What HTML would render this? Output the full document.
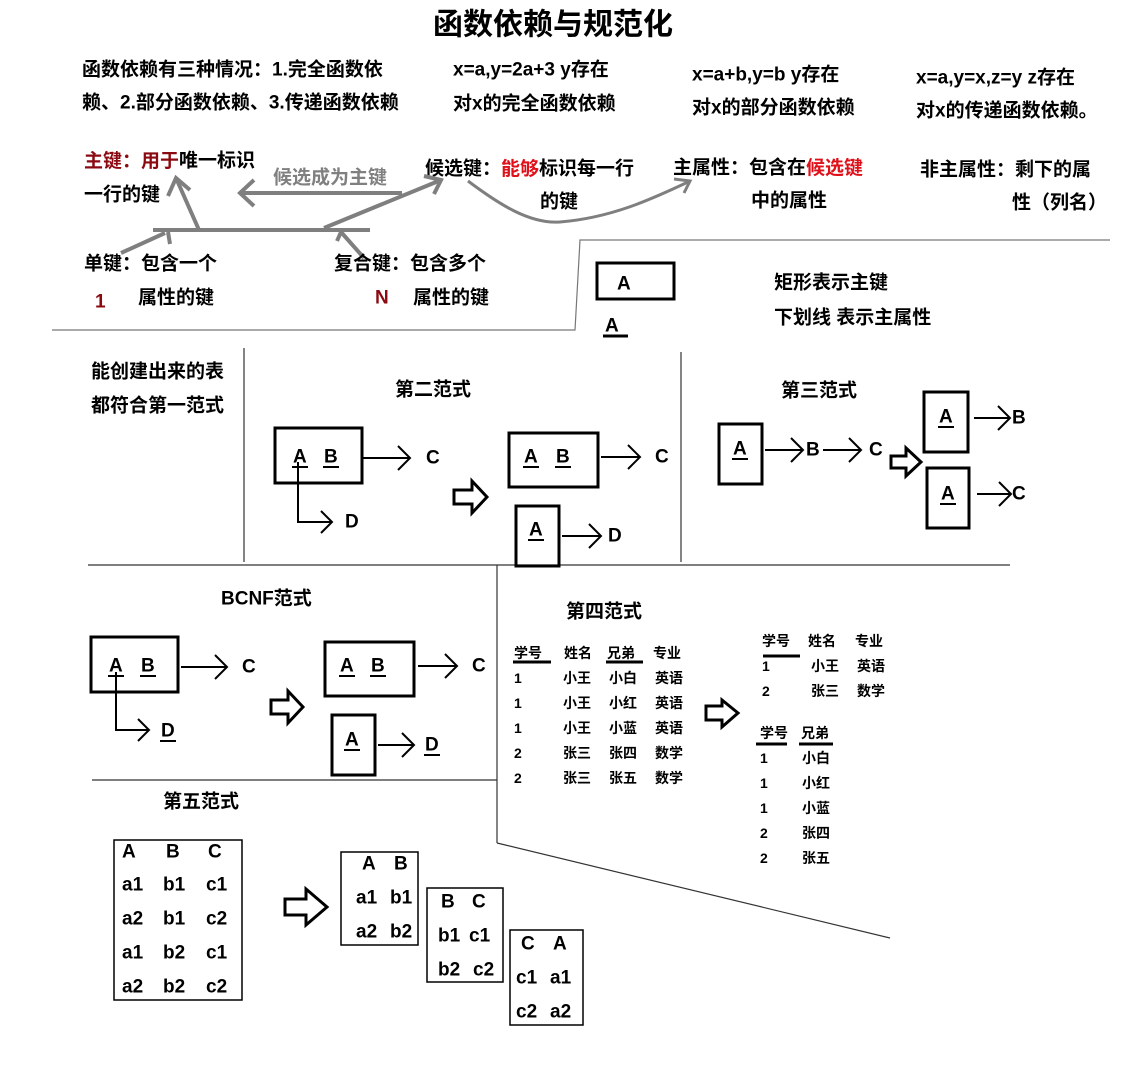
<!DOCTYPE html>
<html><head><meta charset="utf-8"><style>
html,body{margin:0;padding:0;background:#fff;}
svg{display:block;}
text{font-family:"Liberation Sans","Noto Sans CJK SC",sans-serif;font-weight:bold;dominant-baseline:central;}
.t{font-size:19px;fill:#000;}
.s{font-size:14px;fill:#000;}
.r{fill:#e0101a;}
.dr{fill:#8b0a12;}
.g{fill:#808080;}
.bx{fill:none;stroke:#000;stroke-width:3;}
.ln{fill:none;stroke:#000;stroke-width:2;}
.gl{fill:none;stroke:#7f7f7f;stroke-width:4;}
.th{fill:none;stroke:#777;stroke-width:1.2;}
.ha{fill:#fff;stroke:#000;stroke-width:3;}
</style></head><body>
<svg width="1137" height="1072" viewBox="0 0 1137 1072" xmlns="http://www.w3.org/2000/svg">
<text x="553" y="25" text-anchor="middle" style="font-size:30px">函数依赖与规范化</text>

<text class="t" x="82" y="70">函数依赖有三种情况：1.完全函数依</text>
<text class="t" x="82" y="103">赖、2.部分函数依赖、3.传递函数依赖</text>
<text class="t" x="453" y="70">x=a,y=2a+3  y存在</text>
<text class="t" x="453" y="104">对x的完全函数依赖</text>
<text class="t" x="692" y="75">x=a+b,y=b  y存在</text>
<text class="t" x="692" y="108">对x的部分函数依赖</text>
<text class="t" x="916" y="78">x=a,y=x,z=y z存在</text>
<text class="t" x="916" y="111">对x的传递函数依赖。</text>

<text class="t" x="84" y="161"><tspan class="dr">主键：用于</tspan>唯一标识</text>
<text class="t" x="84" y="195">一行的键</text>
<text class="t g" x="273" y="178">候选成为主键</text>
<text class="t" x="425" y="169">候选键：<tspan class="r">能够</tspan>标识每一行</text>
<text class="t" x="540" y="202">的键</text>
<text class="t" x="673" y="168">主属性：包含在<tspan class="r">候选键</tspan></text>
<text class="t" x="751" y="201">中的属性</text>
<text class="t" x="920" y="170">非主属性：剩下的属</text>
<text class="t" x="1012" y="203">性（列名）</text>

<!-- gray diagram -->
<line class="gl" x1="153" y1="230" x2="370" y2="230"/>
<line class="gl" x1="199" y1="230" x2="176" y2="178"/>
<polyline class="gl" points="168,196 176,178 190,190"/>
<line class="gl" x1="402" y1="193" x2="240" y2="193"/>
<polyline class="gl" points="254,180 240,193 254,206"/>
<line class="gl" x1="324" y1="228" x2="441" y2="180"/>
<polyline class="gl" points="424,176 441,180 434,194"/>
<line class="gl" x1="121" y1="253" x2="165" y2="233"/>
<line class="gl" x1="168" y1="232" x2="170" y2="244"/>
<line class="gl" x1="341" y1="232" x2="364" y2="258"/>
<line class="gl" x1="341" y1="232" x2="337" y2="241"/>
<path class="gl" d="M468,181 C500,205 530,224 560,222 C610,218 650,200 688,182" style="stroke-width:3"/>
<polyline class="gl" points="674,179 690,181 684,193" style="stroke-width:3"/>

<text class="t" x="84" y="264">单键：包含一个</text>
<text class="t dr" x="95" y="302">1</text>
<text class="t" x="138" y="298">属性的键</text>
<text class="t" x="334" y="264">复合键：包含多个</text>
<text class="t dr" x="375" y="298">N</text>
<text class="t" x="413" y="298">属性的键</text>

<polyline class="th" points="52,330 575,330 580,240 1110,240"/>
<rect class="bx" x="597" y="263" width="77" height="36"/>
<text class="t" x="617" y="284">A</text>
<text class="t" x="605" y="326">A</text>
<line class="bx" x1="603" y1="336" x2="628" y2="336"/>
<text class="t" x="774" y="283">矩形表示主键</text>
<text class="t" x="774" y="318">下划线 表示主属性</text>

<!-- grid lines -->
<line class="th" x1="244" y1="348" x2="244" y2="562" style="stroke:#333"/>
<line class="th" x1="681" y1="352" x2="681" y2="562" style="stroke:#333"/>
<line class="th" x1="88" y1="565" x2="1010" y2="565" style="stroke:#333"/>
<line class="th" x1="497" y1="565" x2="497" y2="843" style="stroke:#333"/>
<line class="th" x1="92" y1="780" x2="497" y2="780" style="stroke:#333"/>
<line class="th" x1="497" y1="843" x2="890" y2="938" style="stroke:#333"/>

<text class="t" x="91" y="372">能创建出来的表</text>
<text class="t" x="91" y="406">都符合第一范式</text>

<!-- 2NF -->
<text class="t" x="395" y="390">第二范式</text>
<rect class="bx" x="275" y="428" width="87" height="55"/>
<text class="t" x="293" y="457">A</text><line class="ln" x1="292" y1="467" x2="308" y2="467"/>
<text class="t" x="324" y="457">B</text><line class="ln" x1="323" y1="467" x2="339" y2="467"/>
<line class="ln" x1="362" y1="458" x2="410" y2="458"/><polyline class="ln" points="398,446 410,458 398,470"/>
<text class="t" x="426" y="458">C</text>
<polyline class="ln" points="298,462 298,522 332,522"/><polyline class="ln" points="321,511 332,522 321,533"/>
<text class="t" x="345" y="522">D</text>
<polygon class="ha" points="454,490 472,490 472,481 487,497 472,513 472,504 454,504"/>
<rect class="bx" x="509" y="433" width="89" height="54"/>
<text class="t" x="524" y="457">A</text><line class="ln" x1="523" y1="467" x2="539" y2="467"/>
<text class="t" x="556" y="457">B</text><line class="ln" x1="555" y1="467" x2="571" y2="467"/>
<line class="ln" x1="601" y1="457" x2="640" y2="457"/><polyline class="ln" points="628,445 640,457 628,469"/>
<text class="t" x="655" y="457">C</text>
<rect class="bx" x="516" y="506" width="43" height="60"/>
<text class="t" x="529" y="530">A</text><line class="ln" x1="528" y1="540" x2="544" y2="540"/>
<line class="ln" x1="562" y1="536" x2="601" y2="536"/><polyline class="ln" points="589,524 601,536 589,548"/>
<text class="t" x="608" y="536">D</text>

<!-- 3NF -->
<text class="t" x="781" y="391">第三范式</text>
<rect class="bx" x="719" y="424" width="43" height="60"/>
<text class="t" x="733" y="449">A</text><line class="ln" x1="732" y1="459" x2="748" y2="459"/>
<line class="ln" x1="765" y1="450" x2="803" y2="450"/><polyline class="ln" points="791,438 803,450 791,462"/>
<text class="t" x="806" y="450">B</text>
<line class="ln" x1="823" y1="450" x2="861" y2="450"/><polyline class="ln" points="849,438 861,450 849,462"/>
<text class="t" x="869" y="450">C</text>
<polygon class="ha" points="891,456 906,456 906,448 921,462 906,476 906,468 891,468"/>
<rect class="bx" x="924" y="392" width="44" height="60"/>
<text class="t" x="939" y="417">A</text><line class="ln" x1="938" y1="427" x2="954" y2="427"/>
<line class="ln" x1="974" y1="418" x2="1010" y2="418"/><polyline class="ln" points="998,406 1010,418 998,430"/>
<text class="t" x="1012" y="418">B</text>
<rect class="bx" x="927" y="468" width="42" height="60"/>
<text class="t" x="941" y="494">A</text><line class="ln" x1="940" y1="504" x2="956" y2="504"/>
<line class="ln" x1="977" y1="494" x2="1011" y2="494"/><polyline class="ln" points="999,482 1011,494 999,506"/>
<text class="t" x="1012" y="494">C</text>

<!-- BCNF -->
<text class="t" x="221" y="599">BCNF范式</text>
<rect class="bx" x="91" y="637" width="87" height="55"/>
<text class="t" x="109" y="666">A</text><line class="ln" x1="108" y1="676" x2="124" y2="676"/>
<text class="t" x="141" y="666">B</text><line class="ln" x1="140" y1="676" x2="156" y2="676"/>
<line class="ln" x1="181" y1="667" x2="227" y2="667"/><polyline class="ln" points="215,655 227,667 215,679"/>
<text class="t" x="242" y="667">C</text>
<polyline class="ln" points="116,672 116,730 149,730"/><polyline class="ln" points="138,719 149,730 138,741"/>
<text class="t" x="161" y="731">D</text><line class="ln" x1="160" y1="741" x2="176" y2="741"/>
<polygon class="ha" points="271,700 288,700 288,691 303,707 288,723 288,714 271,714"/>
<rect class="bx" x="325" y="642" width="89" height="54"/>
<text class="t" x="340" y="666">A</text><line class="ln" x1="339" y1="676" x2="355" y2="676"/>
<text class="t" x="371" y="666">B</text><line class="ln" x1="370" y1="676" x2="386" y2="676"/>
<line class="ln" x1="418" y1="666" x2="457" y2="666"/><polyline class="ln" points="445,654 457,666 445,678"/>
<text class="t" x="472" y="666">C</text>
<rect class="bx" x="332" y="715" width="43" height="60"/>
<text class="t" x="345" y="740">A</text><line class="ln" x1="344" y1="750" x2="360" y2="750"/>
<line class="ln" x1="378" y1="745" x2="414" y2="745"/><polyline class="ln" points="402,733 414,745 402,757"/>
<text class="t" x="425" y="745">D</text><line class="ln" x1="424" y1="755" x2="440" y2="755"/>

<!-- 5NF -->
<text class="t" x="163" y="802">第五范式</text>
<rect x="114" y="840" width="128" height="160" fill="none" stroke="#000" stroke-width="1.5"/>
<text class="t" x="122" y="852">A</text><text class="t" x="166" y="852">B</text><text class="t" x="208" y="852">C</text>
<text class="t" x="122" y="885">a1</text><text class="t" x="163" y="885">b1</text><text class="t" x="206" y="885">c1</text>
<text class="t" x="122" y="919">a2</text><text class="t" x="163" y="919">b1</text><text class="t" x="206" y="919">c2</text>
<text class="t" x="122" y="953">a1</text><text class="t" x="163" y="953">b2</text><text class="t" x="206" y="953">c1</text>
<text class="t" x="122" y="987">a2</text><text class="t" x="163" y="987">b2</text><text class="t" x="206" y="987">c2</text>
<polygon class="ha" points="285,899 306,899 306,889 327,907 306,925 306,915 285,915"/>
<rect x="341" y="852" width="77" height="93" fill="none" stroke="#000" stroke-width="1.5"/>
<text class="t" x="362" y="864">A</text><text class="t" x="394" y="864">B</text>
<text class="t" x="356" y="898">a1</text><text class="t" x="390" y="898">b1</text>
<text class="t" x="356" y="932">a2</text><text class="t" x="390" y="932">b2</text>
<rect x="427" y="888" width="76" height="94" fill="none" stroke="#000" stroke-width="1.5"/>
<text class="t" x="441" y="902">B</text><text class="t" x="472" y="902">C</text>
<text class="t" x="438" y="936">b1</text><text class="t" x="469" y="936">c1</text>
<text class="t" x="438" y="970">b2</text><text class="t" x="473" y="970">c2</text>
<rect x="510" y="930" width="73" height="95" fill="none" stroke="#000" stroke-width="1.5"/>
<text class="t" x="521" y="944">C</text><text class="t" x="553" y="944">A</text>
<text class="t" x="516" y="978">c1</text><text class="t" x="550" y="978">a1</text>
<text class="t" x="516" y="1012">c2</text><text class="t" x="550" y="1012">a2</text>

<!-- 4NF -->
<text class="t" x="566" y="612">第四范式</text>
<text class="s" x="514" y="653">学号</text><text class="s" x="564" y="653">姓名</text><text class="s" x="607" y="653">兄弟</text><text class="s" x="653" y="653">专业</text>
<line class="bx" x1="513" y1="662" x2="551" y2="662"/><line class="bx" x1="606" y1="662" x2="643" y2="662"/>
<text class="s" x="514" y="678">1</text><text class="s" x="563" y="678">小王</text><text class="s" x="609" y="678">小白</text><text class="s" x="655" y="678">英语</text>
<text class="s" x="514" y="703">1</text><text class="s" x="563" y="703">小王</text><text class="s" x="609" y="703">小红</text><text class="s" x="655" y="703">英语</text>
<text class="s" x="514" y="728">1</text><text class="s" x="563" y="728">小王</text><text class="s" x="609" y="728">小蓝</text><text class="s" x="655" y="728">英语</text>
<text class="s" x="514" y="753">2</text><text class="s" x="563" y="753">张三</text><text class="s" x="609" y="753">张四</text><text class="s" x="655" y="753">数学</text>
<text class="s" x="514" y="778">2</text><text class="s" x="563" y="778">张三</text><text class="s" x="609" y="778">张五</text><text class="s" x="655" y="778">数学</text>
<polygon class="ha" points="706,706 722,706 722,700 738,713 722,727 722,720 706,720"/>
<text class="s" x="762" y="641">学号</text><text class="s" x="808" y="641">姓名</text><text class="s" x="855" y="641">专业</text>
<line class="bx" x1="763" y1="656" x2="800" y2="656"/>
<text class="s" x="762" y="666">1</text><text class="s" x="811" y="666">小王</text><text class="s" x="857" y="666">英语</text>
<text class="s" x="762" y="691">2</text><text class="s" x="811" y="691">张三</text><text class="s" x="857" y="691">数学</text>
<text class="s" x="760" y="733">学号</text><text class="s" x="801" y="733">兄弟</text>
<line class="bx" x1="756" y1="744" x2="787" y2="744"/><line class="bx" x1="799" y1="744" x2="833" y2="744"/>
<text class="s" x="760" y="758">1</text><text class="s" x="802" y="758">小白</text>
<text class="s" x="760" y="783">1</text><text class="s" x="802" y="783">小红</text>
<text class="s" x="760" y="808">1</text><text class="s" x="802" y="808">小蓝</text>
<text class="s" x="760" y="833">2</text><text class="s" x="802" y="833">张四</text>
<text class="s" x="760" y="858">2</text><text class="s" x="802" y="858">张五</text>
</svg>
</body></html>
